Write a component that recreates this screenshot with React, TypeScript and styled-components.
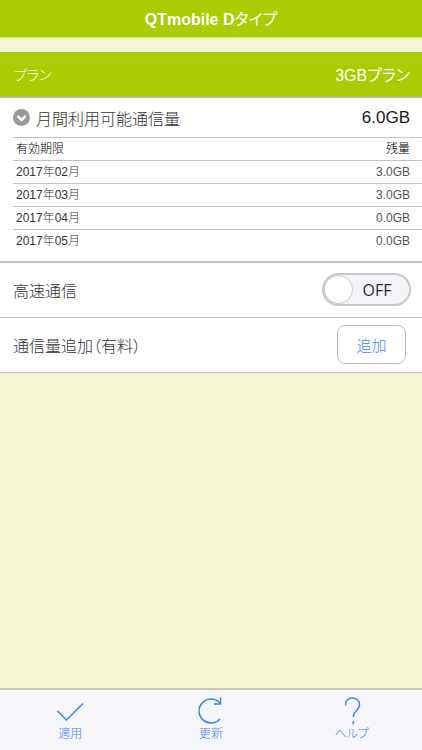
import React, { useState } from "react";
import styled, { createGlobalStyle } from "styled-components";

const colors = {
  green: "#aacc03",
  cream: "#f5f6d3",
  line: "#c3c3c5",
  text: "#333333",
  blue: "#3d86e8",
  bar: "#f6f6fa",
};

const GlobalStyle = createGlobalStyle`
  *, *::before, *::after { box-sizing: border-box; }
  body {
    margin: 0;
    background: ${colors.cream};
    color: ${colors.text};
    font-family: "Liberation Sans", "Noto Sans CJK JP", sans-serif;
    font-size: 16px;
    font-weight: 300;
    font-feature-settings: "palt";
  }
  button, input { font: inherit; font-feature-settings: inherit; }
`;

const Page = styled.div`
  min-height: 100vh;
  display: flex;
  flex-direction: column;
`;

const Header = styled.header`
  height: 38px;
  display: flex;
  align-items: center;
  justify-content: center;
  background: ${colors.green};
  border-bottom: 1px solid #d6e48a;
  color: #fff;
`;

const Title = styled.h1`
  margin: 0;
  padding-top: 2px;
  font-size: 16px;
  line-height: 24px;
  font-weight: 700;
`;

const Kana = styled.span`
  font-weight: 400;
`;

const Main = styled.main`
  flex: 1;
  padding-top: 14px;
`;

const PlanBar = styled.section`
  height: 46px;
  padding: 0 12px 0 14px;
  display: flex;
  align-items: center;
  justify-content: space-between;
  background: ${colors.green};
  border-bottom: 2px solid #b5ba90;
  color: #fff;
`;

const PlanLabel = styled.span`
  font-size: 14px;
`;

const PlanName = styled.span`
  font-size: 16px;
  font-weight: 400;
`;

const Usage = styled.section`
  padding: 0 0 8px 13px;
  background: #fff;
  border-bottom: 2px solid ${colors.line};
`;

const UsageToggle = styled.button`
  width: 100%;
  height: 39px;
  padding: 0 12px 0 0;
  display: flex;
  align-items: center;
  gap: 6px;
  border: 0;
  background: none;
  color: ${colors.text};
  font-size: 16px;
  text-align: left;
`;

const UsageTotal = styled.span`
  margin-left: auto;
  color: #1a1a1a;
  font-size: 17px;
`;

const Table = styled.table`
  width: 100%;
  border-collapse: collapse;
  font-size: 12px;
  line-height: 16px;

  tr {
    height: 23px;
    border-top: 1px solid ${colors.line};
  }
  th {
    padding: 0 12px 0 3px;
    font-weight: 300;
    color: #000;
    text-align: left;
  }
  td {
    padding: 0 12px 0 3px;
    font-weight: 300;
    color: #333;
  }
  th:last-child,
  td:last-child {
    text-align: right;
  }
  td:last-child {
    color: #555;
  }
`;

const SettingRow = styled.section<{ $end: number }>`
  height: 55px;
  padding: 0 ${(p) => p.$end}px 0 13px;
  display: flex;
  align-items: center;
  justify-content: space-between;
  background: #fff;
  border-bottom: 1px solid ${colors.line};
`;

const Switch = styled.label<{ $on: boolean }>`
  width: 89px;
  height: 33px;
  padding: 0 ${(p) => (p.$on ? "0 0 8px" : "8px 0 0")};
  display: flex;
  flex-direction: ${(p) => (p.$on ? "row-reverse" : "row")};
  align-items: center;
  border: 2px solid #c6c6cb;
  border-radius: 17px;
  background: #f4f4f8;
`;

const SwitchThumb = styled.input`
  appearance: none;
  width: 29px;
  height: 29px;
  margin: 0;
  border: 1px solid #c6c6cb;
  border-radius: 50%;
  background: #fff;
`;

const SwitchText = styled.span`
  flex: 1;
  text-align: center;
  font-family: "Open Sans", sans-serif;
  font-size: 16px;
  line-height: 24px;
  font-weight: 400;
  color: #2b2b33;
`;

const AddButton = styled.button`
  width: 69px;
  height: 39px;
  padding: 0;
  border: 1px solid #bdbdc0;
  border-radius: 8px;
  background: #fff;
  color: ${colors.blue};
  font-size: 15px;
`;

const Toolbar = styled.nav`
  height: 62px;
  display: grid;
  grid-template-columns: repeat(3, 1fr);
  background: ${colors.bar};
  border-top: 2px solid #c9cabb;
`;

const Tool = styled.button`
  padding: 6px 0 0;
  display: flex;
  flex-direction: column;
  align-items: center;
  justify-content: flex-start;
  border: 0;
  background: none;
  color: ${colors.blue};
  font-size: 12px;
  line-height: 16px;
`;

const ToolIcon = styled.svg`
  width: 30px;
  height: 30px;
  fill: none;
  stroke: currentColor;
  stroke-width: 1.5;
`;

const usage = [
  ["2017年02月", "3.0GB"],
  ["2017年03月", "3.0GB"],
  ["2017年04月", "0.0GB"],
  ["2017年05月", "0.0GB"],
];

const tools = [
  { label: "適用", icon: <path d="M2.500 15l9 9L28 7.500" /> },
  {
    label: "更新",
    icon: <path d="M24 23A12 12 0 1 1 24 7M24.500 1.500v6.500H18" />,
  },
  {
    label: "ヘルプ",
    icon: <path d="M8.500 9.500C8.500 5 11 2 15 2s7.500 2.500 7.500 6.500c0 3-1.800 4.800-3.700 6.800-1.800 1.800-2.500 3-2.500 6M16.300 25v3.500" />,
  },
];

export default function App() {
  const [open, setOpen] = useState(true);
  const [fast, setFast] = useState(false);

  return (
    <Page>
      <GlobalStyle />
      <Header>
        <Title>
          QTmobile D<Kana>タイプ</Kana>
        </Title>
      </Header>
      <Main>
        <PlanBar>
          <PlanLabel>プラン</PlanLabel>
          <PlanName>3GBプラン</PlanName>
        </PlanBar>
        <Usage>
          <UsageToggle type="button" aria-expanded={open} onClick={() => setOpen(!open)}>
            <svg width="17" height="17" viewBox="0 0 17 17" aria-hidden="true">
              <circle cx="8.500" cy="8.500" r="8.500" fill="#999" />
              <path d="M4.500 7l4 4 4-4" fill="none" stroke="#fff" strokeWidth="2.500" />
            </svg>
            <span>月間利用可能通信量</span>
            <UsageTotal>6.0GB</UsageTotal>
          </UsageToggle>
          {open && (
            <Table>
              <thead>
                <tr>
                  <th scope="col">有効期限</th>
                  <th scope="col">残量</th>
                </tr>
              </thead>
              <tbody>
                {usage.map(([month, left]) => (
                  <tr key={month}>
                    <td>{month}</td>
                    <td>{left}</td>
                  </tr>
                ))}
              </tbody>
            </Table>
          )}
        </Usage>
        <SettingRow $end={11}>
          <span id="fast-label">高速通信</span>
          <Switch $on={fast}>
            <SwitchThumb
              type="checkbox"
              role="switch"
              aria-labelledby="fast-label"
              checked={fast}
              onChange={(e) => setFast(e.target.checked)}
            />
            <SwitchText>{fast ? "ON" : "OFF"}</SwitchText>
          </Switch>
        </SettingRow>
        <SettingRow $end={16}>
          <span>通信量追加（有料）</span>
          <AddButton type="button">追加</AddButton>
        </SettingRow>
      </Main>
      <Toolbar>
        {tools.map((t) => (
          <Tool type="button" key={t.label}>
            <ToolIcon viewBox="0 0 30 30" aria-hidden="true">
              {t.icon}
            </ToolIcon>
            {t.label}
          </Tool>
        ))}
      </Toolbar>
    </Page>
  );
}
